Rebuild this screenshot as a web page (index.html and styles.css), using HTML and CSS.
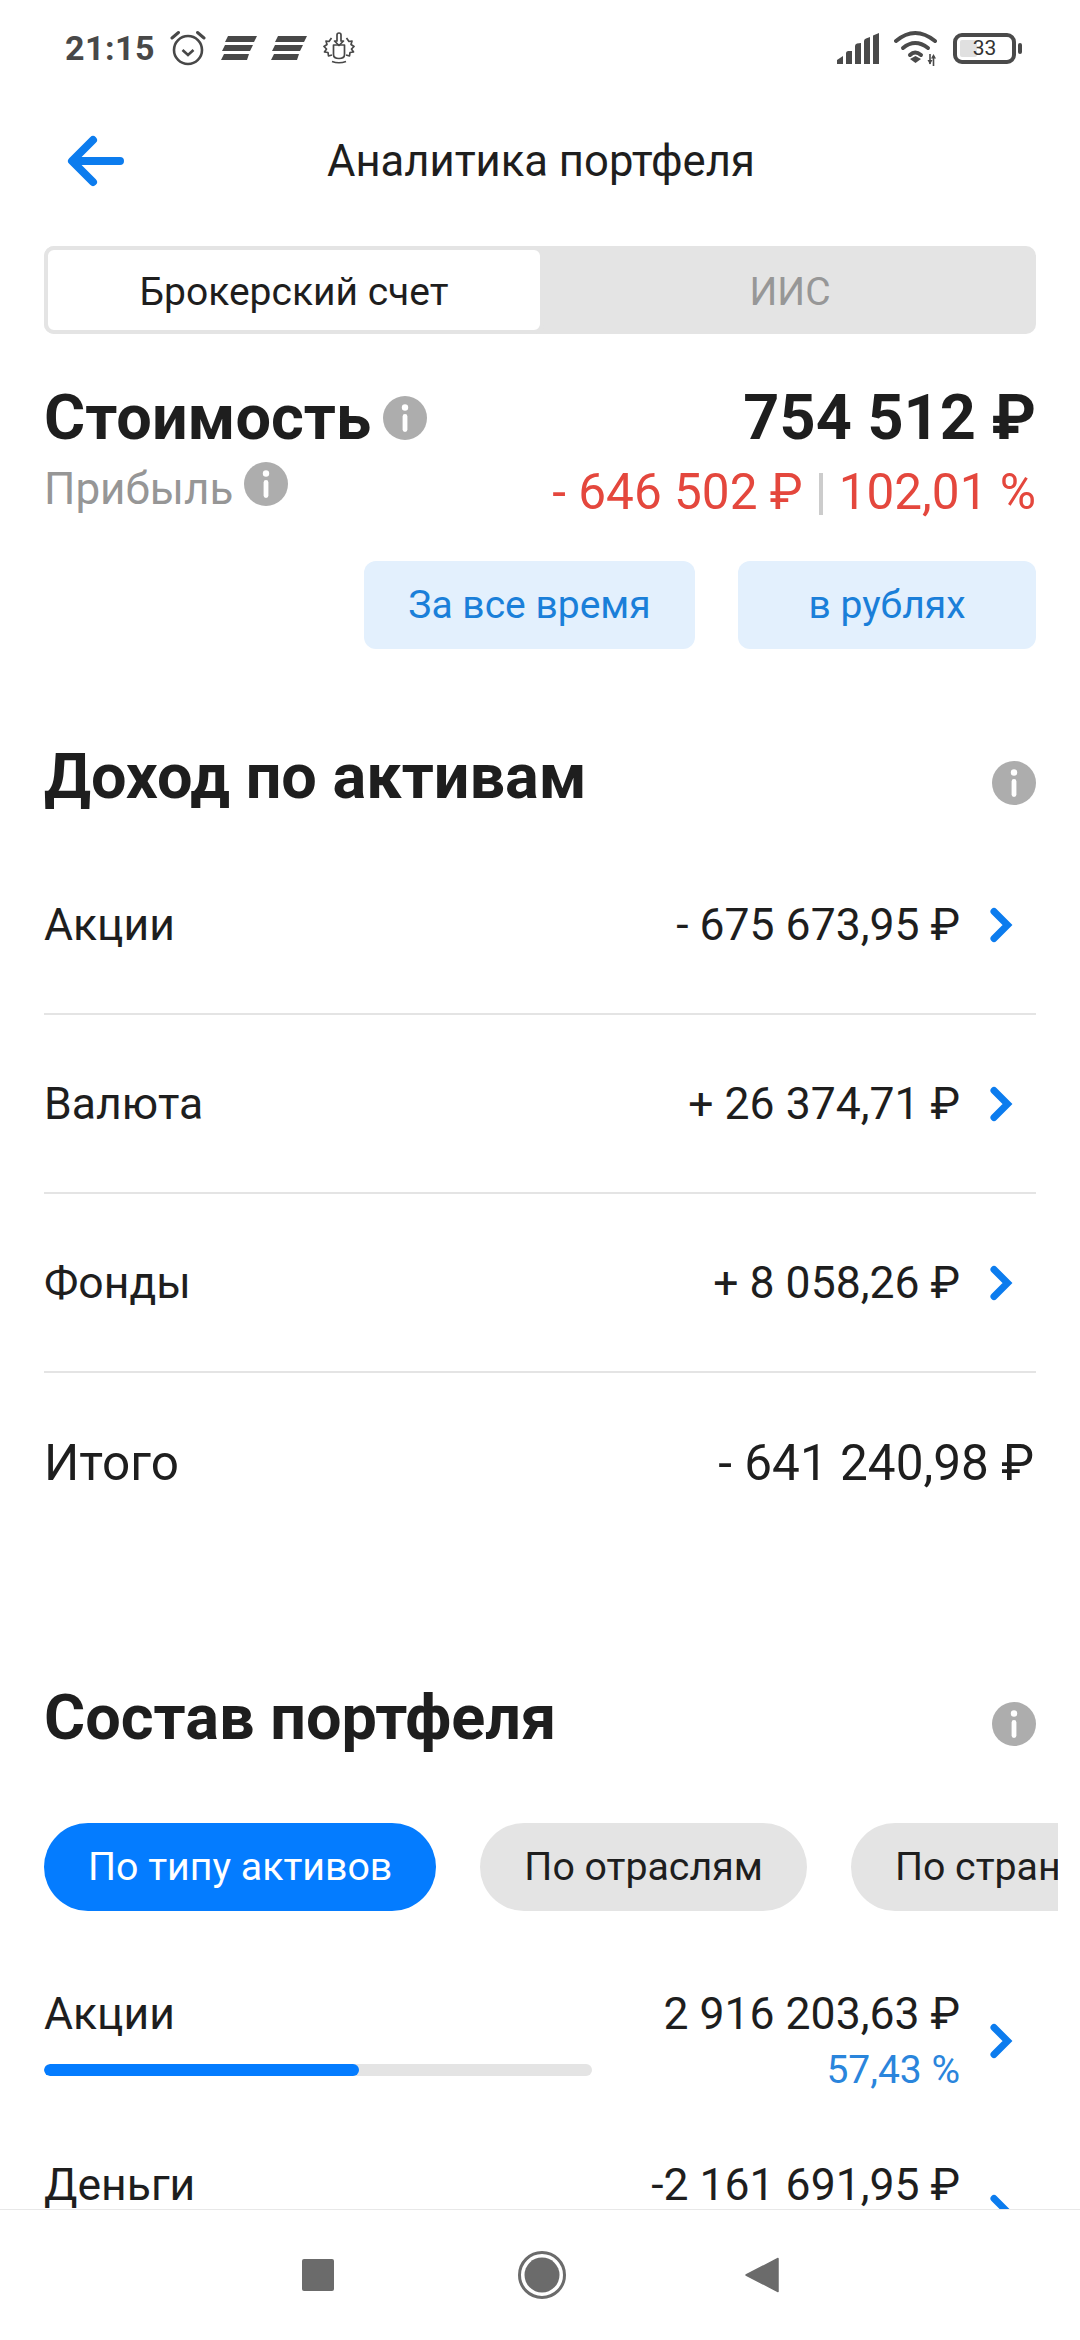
FILE: index.html
```html
<!DOCTYPE html>
<html lang="ru">
<head>
<meta charset="utf-8">
<title>Аналитика портфеля</title>
<link rel="stylesheet" href="styles.css">
</head>
<body>
<svg class="defs" width="0" height="0">
  <symbol id="info" viewBox="0 0 44 44">
    <circle cx="22" cy="22" r="22" fill="#adadad"/>
    <circle cx="22" cy="11.5" r="3.2" fill="#fff"/>
    <rect x="19.6" y="18" width="4.8" height="18" rx="2.4" fill="#fff"/>
  </symbol>
  <symbol id="chev" viewBox="0 0 24 36">
    <path d="M5 4.5 L18.5 18 L5 31.5" fill="none" stroke="#0c7cee" stroke-width="7" stroke-linecap="round" stroke-linejoin="miter"/>
  </symbol>
  <symbol id="notif" viewBox="0 0 36 26">
    <path d="M7 1H36L33 7H4Z M4 10H32L29 16H1Z M3 19H28L26 25H0Z" fill="#484848"/>
  </symbol>
</svg>
<div class="screen">
  <div class="status">
    <span class="time">21:15</span>
    <svg class="st-alarm" viewBox="0 0 36 36"><g fill="none" stroke="#484848"><circle cx="18" cy="20" r="14" stroke-width="2.6"/><path d="M12.5 20l5.5 5 5.5-5" stroke-width="2.6"/><path d="M2 8L8.5 2.5M34 8L27.5 2.5" stroke-width="3" stroke-linecap="round"/></g></svg>
    <svg class="st-notif"><use href="#notif"/></svg>
    <svg class="st-notif"><use href="#notif"/></svg>
    <svg class="st-crest" viewBox="0 0 34 32"><g fill="none" stroke="#484848" stroke-width="1.7" stroke-linejoin="round"><path d="M11.5 13h11v9.5c0 2.500-2.300 4-5.500 4s-5.500-1.500-5.500-4z"/><path d="M15 9V3a2 2 0 0 1 4 0V9h2.500L17 13.500 12.500 9z"/><path d="M9.500 6L7 9.500 4 9l1 3.500L2 14.500l2.500 2.500-2 3 3.500.5.500 3.500 3.500-1M24.500 6L27 9.500 30 9l-1 3.500 3 2-2.500 2.500 2 3-3.500.5-.5 3.500-3.500-1M10 29.500q7 2.500 14 0"/></g></svg>
    <span class="st-gap"></span>
    <svg class="st-signal" viewBox="0 0 42 31"><path d="M0 31V27L6 23V31ZM9 31V20Q9 18.500 11 18H15V31ZM18 31V13Q18 11 20 10.500L24 10V31ZM27 31V8Q27 6 29 5.500L33 4V31ZM36 31V2.500L42 0V31Z" fill="#4a4a4a"/></svg>
    <svg class="st-wifi" viewBox="0 0 44 36"><g fill="none" stroke="#4a4a4a" stroke-width="4" stroke-linecap="round"><path d="M2 11Q21-5 41 11"/><path d="M9 18Q21 8 34 18"/><path d="M16 25Q21 20 27 25"/></g><path d="M16 29L21.500 26L27 29L21.500 33Z" fill="#4a4a4a"/><path d="M36 24V34M39.500 26V36" stroke="#4a4a4a" stroke-width="1.600" fill="none"/><path d="M33.500 30H38.500L36 34.500ZM37 28.500L39.500 24L42 28.500Z" fill="#4a4a4a"/></svg>
    <span class="battery"><span class="bat-fill"></span><span class="bat-num">33</span></span>
    <span class="bat-cap"></span>
  </div>

  <header class="head">
    <svg class="back" viewBox="0 0 58 52"><path d="M54 26H7M27 5L6 26L27 47" fill="none" stroke="#0c7cee" stroke-width="8" stroke-linecap="round" stroke-linejoin="round"/></svg>
    <h1 class="head-title">Аналитика портфеля</h1>
  </header>

  <main class="main">
    <div class="seg">
      <div class="seg-tab seg-on">Брокерский счет</div>
      <div class="seg-tab seg-off">ИИС</div>
    </div>

    <div class="sum-row">
      <div class="sum-l"><span class="big">Стоимость</span><svg class="info i1"><use href="#info"/></svg></div>
      <div class="big">754 512 ₽</div>
    </div>
    <div class="sum-row sum-row2">
      <div class="sum-l"><span class="profit">Прибыль</span><svg class="info i2"><use href="#info"/></svg></div>
      <div class="loss">- 646 502 ₽<span class="sep"></span>102,01 %</div>
    </div>

    <div class="filters">
      <div class="fbtn fbtn-a">За все время</div>
      <div class="fbtn fbtn-b">в рублях</div>
    </div>

    <div class="sec-head sec-1">
      <h2 class="big">Доход по активам</h2>
      <svg class="info i3"><use href="#info"/></svg>
    </div>

    <div class="inc">
      <span>Акции</span><span class="inc-v">- 675 673,95 ₽</span>
      <svg class="chev"><use href="#chev"/></svg>
    </div>
    <div class="inc">
      <span>Валюта</span><span class="inc-v">+ 26 374,71 ₽</span>
      <svg class="chev"><use href="#chev"/></svg>
    </div>
    <div class="inc">
      <span>Фонды</span><span class="inc-v">+ 8 058,26 ₽</span>
      <svg class="chev"><use href="#chev"/></svg>
    </div>
    <div class="inc inc-total">
      <span>Итого</span><span>- 641 240,98 ₽</span>
    </div>

    <div class="sec-head sec-2">
      <h2 class="big">Состав портфеля</h2>
      <svg class="info i3"><use href="#info"/></svg>
    </div>

    <div class="pills">
      <div class="pill pill-on">По типу активов</div>
      <div class="pill">По отраслям</div>
      <div class="pill">По странам</div>
    </div>

    <div class="asset asset-first">
      <div class="asset-l">
        <div class="asset-n">Акции</div>
        <div class="bar"><div class="bar-fill" style="width:57.43%"></div></div>
      </div>
      <div class="asset-r">
        <div class="asset-n">2 916 203,63 ₽</div>
        <div class="pct">57,43 %</div>
      </div>
      <svg class="chev"><use href="#chev"/></svg>
    </div>
    <div class="asset">
      <div class="asset-l">
        <div class="asset-n">Деньги</div>
        <div class="bar"></div>
      </div>
      <div class="asset-r">
        <div class="asset-n">-2 161 691,95 ₽</div>
        <div class="pct">42,57 %</div>
      </div>
      <svg class="chev"><use href="#chev"/></svg>
    </div>
  </main>

  <nav class="nav">
    <span class="nav-sq"></span>
    <svg class="nav-home" viewBox="0 0 48 48"><circle cx="24" cy="24" r="22.5" fill="none" stroke="#6b6b6b" stroke-width="3"/><circle cx="24" cy="24" r="17.5" fill="#6b6b6b"/></svg>
    <svg class="nav-back" viewBox="0 0 34 36"><path d="M33 1.5V34.5L1 18Z" fill="#6b6b6b" stroke="#6b6b6b" stroke-width="1.5" stroke-linejoin="round"/></svg>
  </nav>
</div>
</body>
</html>
```
FILE: styles.css
```css
* { box-sizing: border-box; }
html, body { margin: 0; padding: 0; background: #fff; }
body { font-family: Roboto, "Noto Sans", sans-serif; color: #1e1e1e; }
.defs { position: absolute; }
.screen { width: 1080px; height: 2340px; display: flex; flex-direction: column; overflow: hidden; background: #fff; }

.status { height: 96px; flex: none; display: flex; align-items: center; padding-left: 65px; padding-right: 58px; }
.time { font-size: 34px; font-weight: 700; color: #484848; letter-spacing: 0.5px; margin-right: 15px; }
.st-alarm { width: 36px; height: 36px; margin-right: 15px; }
.st-notif { width: 36px; height: 26px; margin-right: 14px; }
.st-crest { width: 34px; height: 32px; margin-left: 1px; }
.st-gap { flex: 1; }
.st-signal { width: 42px; height: 31px; margin-right: 15px; }
.st-wifi { width: 44px; height: 36px; margin-right: 15px; }
.battery { position: relative; width: 63px; height: 31px; border: 4px solid #4a4a4a; border-radius: 9px; display: flex; align-items: center; justify-content: center; }
.bat-fill { position: absolute; left: 3px; top: 3px; bottom: 3px; width: 17px; background: #e0e0e0; border-radius: 2px; }
.bat-num { position: relative; font-size: 21px; color: #333; line-height: 1; }
.bat-cap { width: 4px; height: 11px; background: #4a4a4a; border-radius: 2px; margin-left: 2px; }

.head { height: 130px; flex: none; display: flex; align-items: center; padding-left: 66px; }
.back { width: 58px; height: 52px; flex: none; }
.head-title { margin: 0 0 0 203px; font-size: 43.6px; font-weight: 400; color: #1e1e1e; }

.main { flex: 1; min-height: 0; overflow: hidden; padding: 20px 44px 0; }

.seg { display: flex; height: 88px; background: #e4e4e4; border-radius: 10px; }
.seg-tab { flex: 1; display: flex; align-items: center; justify-content: center; font-size: 39px; padding-top: 3px; }
.seg-on { flex: none; width: 500px; background: #fff; border: 4px solid #e4e4e4; border-radius: 10px; }
.seg-off { color: #979797; }

.sum-row { display: flex; justify-content: space-between; align-items: center; margin-top: 50px; height: 68px; }
.sum-row2 { margin-top: 11px; height: 52px; }
.sum-l { display: flex; align-items: center; }
.big { margin: 0; font-size: 63px; font-weight: 700; line-height: 68px; color: #1e1e1e; }
.info { width: 44px; height: 44px; flex: none; }
.i1 { margin-left: 12px; }
.i2 { margin-left: 11px; margin-top: -10px; }
.i3 { margin-top: 12px; }
.profit { font-size: 44px; color: #969696; }
.loss { font-size: 49.5px; color: #e4473d; display: flex; align-items: center; padding-top: 5px; }
.sep { width: 4px; height: 42px; background: #ccc; margin: 4px 16px 0; }

.filters { display: flex; justify-content: flex-end; gap: 43px; margin-top: 46px; }
.fbtn { height: 88px; background: #e3f0fd; border-radius: 12px; color: #1a7fd9; font-size: 39px; display: flex; align-items: center; justify-content: center; }
.fbtn-a { width: 331px; }
.fbtn-b { width: 298px; }

.sec-head { display: flex; justify-content: space-between; align-items: center; }
.sec-1 { margin-top: 94px; margin-bottom: 25px; }
.sec-2 { margin-top: 132px; }

.inc { height: 179px; display: flex; align-items: center; font-size: 44.5px; border-bottom: 2px solid #e4e4e4; padding-right: 23px; }
.inc-v { margin-left: auto; }
.inc .chev { margin-left: 29px; }
.inc-total { border-bottom: 0; padding-right: 2px; justify-content: space-between; font-size: 49.5px; }
.chev { width: 24px; height: 36px; flex: none; }

.pills { display: flex; gap: 44px; margin: 71px -22px 0 0; overflow: hidden; }
.pill { flex: none; height: 88px; padding: 0 44px; border-radius: 44px; background: #e4e4e4; font-size: 39.3px; display: flex; align-items: center; }
.pill-on { background: #047cff; color: #fff; }

.asset { display: flex; align-items: center; padding-right: 23px; margin-bottom: 59px; }
.asset-first { margin-top: 74px; }
.asset-l { width: 548px; flex: none; }
.asset-r { margin-left: auto; text-align: right; }
.asset .chev { margin-left: 29px; }
.asset-n { font-size: 44.5px; line-height: 58px; }
.bar { height: 12px; margin-top: 21px; margin-bottom: 21px; background: #e4e4e4; border-radius: 6px; overflow: hidden; }
.bar-fill { height: 100%; background: #047cff; border-radius: 6px; }
.pct { font-size: 39px; line-height: 54px; color: #2a85dc; }

.nav { height: 131px; flex: none; border-top: 1px solid #e8e8e8; background: #fff; display: flex; align-items: center; justify-content: center; }
.nav-sq { width: 32px; height: 32px; background: #6b6b6b; border-radius: 2px; }
.nav-home { width: 48px; height: 48px; margin-left: 184px; }
.nav-back { width: 34px; height: 36px; margin-left: 179px; }
```
